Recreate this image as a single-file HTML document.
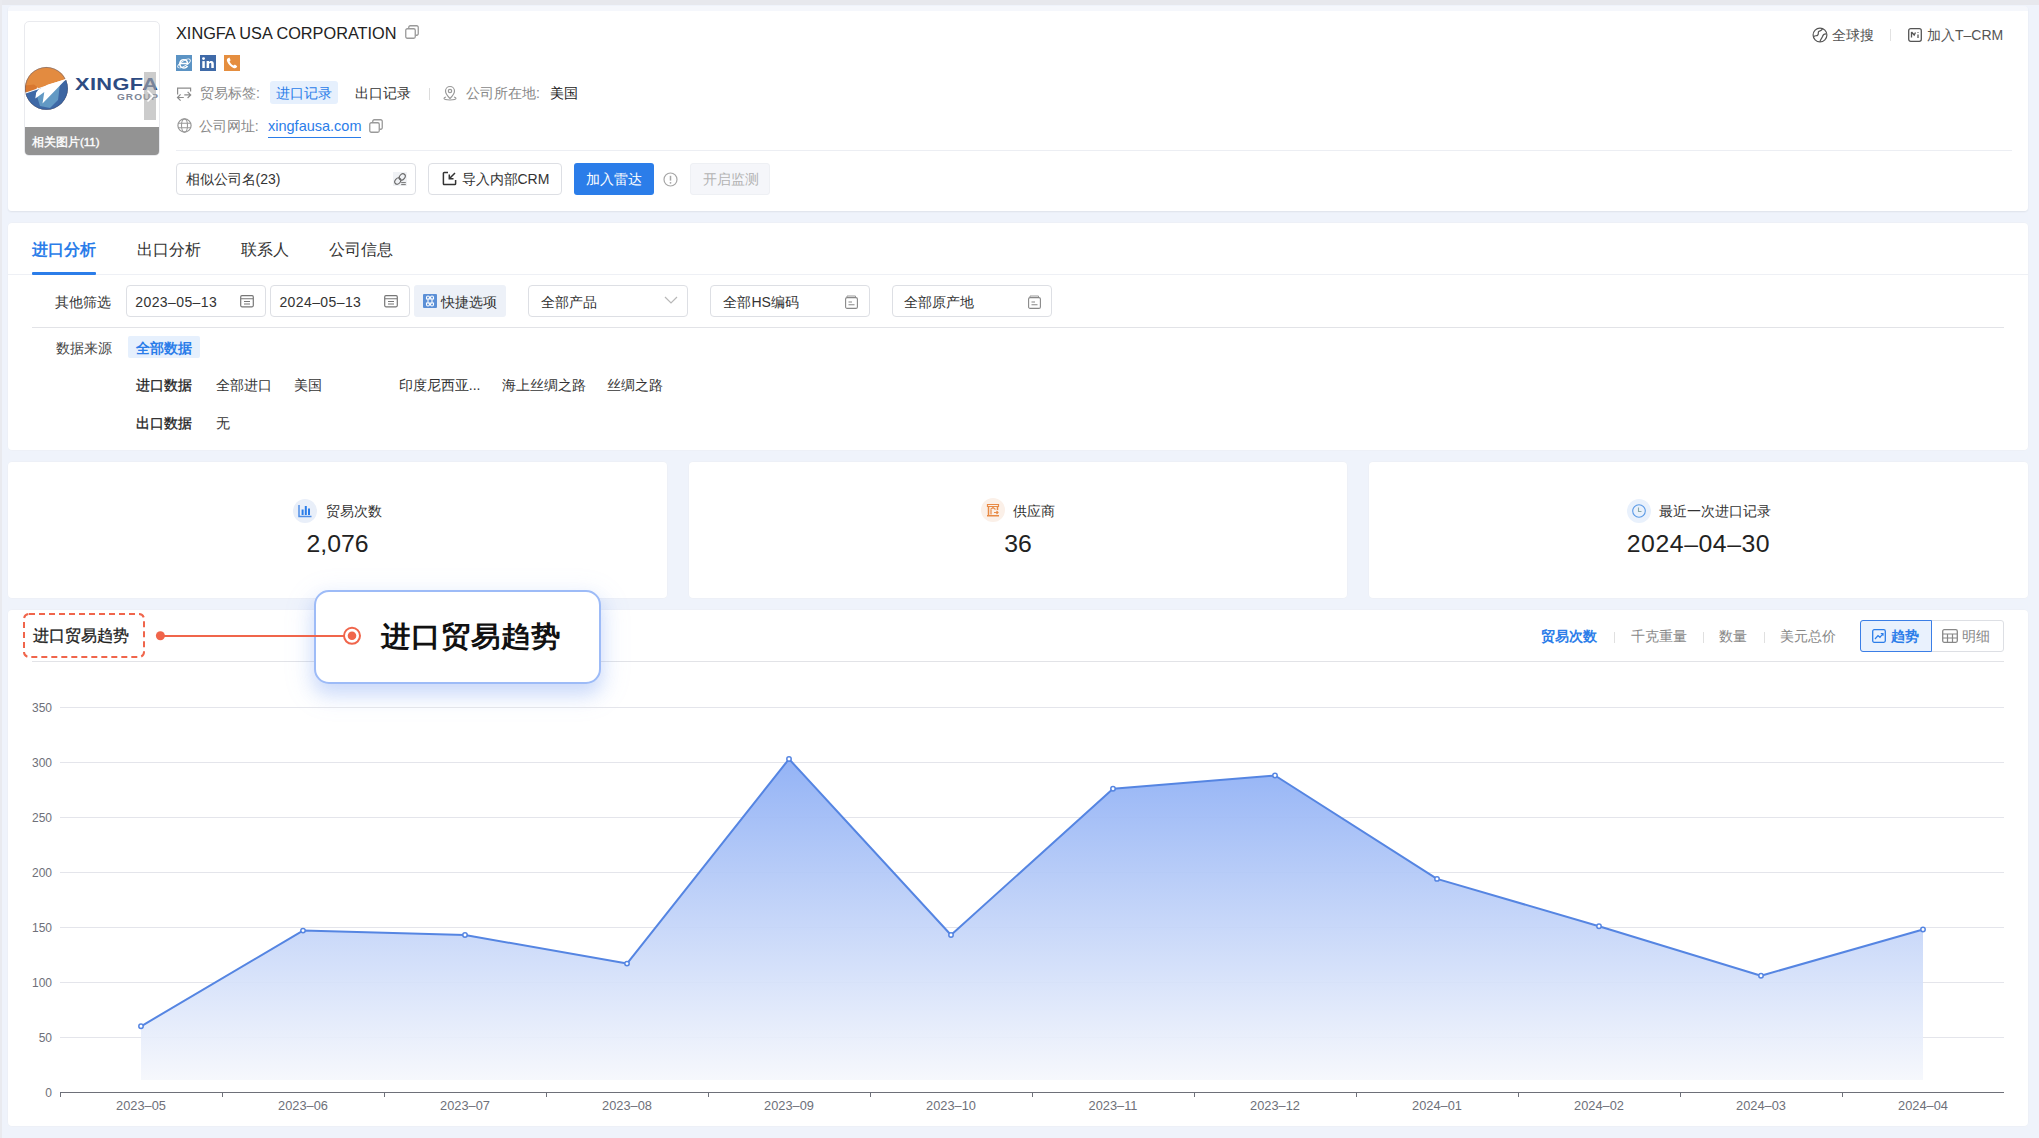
<!DOCTYPE html>
<html><head><meta charset="utf-8">
<style>
*{box-sizing:border-box;margin:0;padding:0}
html,body{width:2039px;height:1138px;overflow:hidden}
body{position:relative;background:#eff3fb;font-family:"Liberation Sans",sans-serif;color:#222;font-size:14px;line-height:20px}
.a{position:absolute;white-space:nowrap}
.card{position:absolute;background:#fff;border-radius:4px;box-shadow:0 0 0 0.5px #eceef3}
.g{color:#888}
.blue{color:#2b7de9}
.box{position:absolute;border:1px solid #dddfe4;border-radius:4px;background:#fff}
svg{position:absolute;overflow:visible}
</style></head><body>
<!-- top strip -->
<div class="a" style="left:0;top:0;width:2039px;height:5px;background:#e7e8ed"></div>
<div class="a" style="left:0;top:0;width:2px;height:1138px;background:#e9eaef"></div>

<!-- ============ HEADER CARD ============ -->
<div class="card" style="left:8px;top:6px;width:2020px;height:205px;box-shadow:0 1px 2px rgba(0,0,0,0.07);background:linear-gradient(#f5f7fc 0,#f5f7fc 5px,#fff 5px)"></div>

<!-- logo box -->
<div class="a" style="left:24px;top:21px;width:136px;height:135px;border:1px solid #e9eaee;border-radius:5px;overflow:hidden;background:#fff">
  <svg style="left:-25px;top:-22px" width="100" height="120" viewBox="0 0 100 120">
    <defs><clipPath id="cc"><circle cx="46.35" cy="88.4" r="21.4"/></clipPath></defs>
    <g clip-path="url(#cc)">
      <rect x="20" y="60" width="55" height="55" fill="#e38b40"/>
      <path d="M20 86 L34 84.5 L40 89 L46 85 L48 92 L20 96 Z" fill="#d97830"/>
      <path d="M20 94.5 L66.5 79.8 L75 78 V115 H20 Z" fill="#3f69a6"/>
      <path d="M36 93 L50 88 L60 84 L58 100 L50 108 L40 106 Z" fill="#6299c4"/>
      <path d="M60 84 L75 78 V115 H58 Z" fill="#3d64a0" opacity="0.6"/>
    </g>
    <circle cx="46.35" cy="88.4" r="21" fill="none" stroke="#33538a" stroke-width="0.8" opacity="0.5"/>
    <path d="M24 93.6 L66.5 79.2" stroke="#fff" stroke-width="1.1"/>
    <path d="M66 79.3 L48 84.5 L38.5 89.5 L36.2 92.6 L35.3 98.6 L44.3 91.9 L42.5 103.6 Z" fill="#fff"/>
    <circle cx="37.5" cy="88.3" r="0.9" fill="#fff"/>
  </svg>
  <div class="a" style="left:50px;top:53px;font-size:17px;line-height:20px;font-weight:bold;color:#2d4b82;transform:scaleX(1.28);transform-origin:0 0;letter-spacing:0.3px">XINGFA</div>
  <div class="a" style="left:92px;top:70.1px;font-size:9px;line-height:10px;font-weight:bold;color:#7d8697;letter-spacing:0.9px;transform:scaleX(1.12);transform-origin:0 0">GROUP</div>
  <div class="a" style="left:119px;top:50px;width:12px;height:48px;background:rgba(170,170,170,0.6)"></div>
  <svg style="left:121px;top:67px" width="9" height="14" viewBox="0 0 9 14"><path d="M1.5 1.5 L7 7 L1.5 12.5" fill="none" stroke="#fff" stroke-width="1.6"/></svg>
  <div class="a" style="left:0;top:105px;width:134px;height:29px;background:#939393"></div>
  <div class="a" style="left:7px;top:112px;font-size:11.5px;line-height:16px;color:#fff;-webkit-text-stroke:0.35px #fff">相关图片(11)</div>
</div>

<!-- title -->
<div class="a" style="left:176px;top:23.2px;font-size:16.3px;color:#222">XINGFA USA CORPORATION</div>
<svg style="left:405px;top:25px" width="14" height="14" viewBox="0 0 14 14"><rect x="0.75" y="3.75" width="9.5" height="9.5" rx="1.5" fill="#fff" stroke="#9a9a9a" stroke-width="1.3"/><path d="M3.75 3.5 V2.25 a1.5 1.5 0 0 1 1.5-1.5 H11.75 a1.5 1.5 0 0 1 1.5 1.5 V8.75 a1.5 1.5 0 0 1 -1.5 1.5 H10.5" fill="none" stroke="#9a9a9a" stroke-width="1.3"/></svg>

<!-- social -->
<svg style="left:176px;top:55px" width="16" height="16" viewBox="0 0 16 16"><rect width="16" height="16" fill="#5b93c4"/><path d="M12.3 9.2 H4.6 C4.7 11 6 12.2 7.9 12.2 C9.2 12.2 10.1 11.6 10.6 10.7 L12.2 11.3 C11.4 12.8 9.9 13.7 7.9 13.7 C5 13.7 3 11.7 3 8.8 C3 5.9 5 3.9 7.8 3.9 C10.6 3.9 12.4 5.8 12.4 8.7 Z M4.7 7.8 H10.7 C10.5 6.3 9.4 5.3 7.8 5.3 C6.2 5.3 5 6.3 4.7 7.8 Z" fill="#fff"/><ellipse cx="8" cy="8.5" rx="7.2" ry="2.6" transform="rotate(-32 8 8.5)" fill="none" stroke="#fff" stroke-width="0.9"/></svg>
<svg style="left:200px;top:55px" width="16" height="16" viewBox="0 0 16 16"><rect width="16" height="16" fill="#3f6aa8"/><rect x="2.3" y="6.1" width="2.5" height="6.9" fill="#fff"/><circle cx="3.55" cy="3.6" r="1.45" fill="#fff"/><path d="M6.6 6.1 H9 V7.1 C9.5 6.3 10.4 5.9 11.3 5.9 C13 5.9 13.8 7 13.8 8.8 V13 H11.3 V9.3 C11.3 8.4 11 7.9 10.3 7.9 C9.5 7.9 9.1 8.5 9.1 9.4 V13 H6.6 Z" fill="#fff"/></svg>
<svg style="left:224px;top:55px" width="16" height="16" viewBox="0 0 16 16"><rect width="16" height="16" fill="#e58e3f"/><path d="M5.4 2.6 L3.6 3.4 C2.8 4 2.7 5.2 3.2 6.6 C4.3 9.4 6.6 11.8 9.4 13 C10.8 13.5 11.9 13.3 12.5 12.6 L13.2 11.2 L10.9 9.6 L9.7 10.6 C8 9.9 6.3 8.1 5.6 6.4 L6.6 5.3 Z" fill="#fff"/></svg>
<!-- row 3 -->
<svg style="left:177px;top:86.6px" width="15" height="14" viewBox="0 0 15 14"><path d="M0.6 7.4 V1.2 H13.6 V4.5 M7.3 7.9 H13.6 M10.6 4.8 L13.7 7.9 L10.6 11 M0.5 10.5 H6.8 M3.6 7.4 L0.5 10.5 L3.6 13.6" fill="none" stroke="#8c8c8c" stroke-width="1.2"/></svg>
<div class="a g" style="left:200px;top:83.3px">贸易标签:</div>
<div class="a" style="left:270px;top:81px;width:68px;height:23px;background:#e6f0fd;border-radius:3px"></div>
<div class="a blue" style="left:276px;top:83.3px">进口记录</div>
<div class="a" style="left:354.5px;top:83.3px;color:#333">出口记录</div>
<div class="a" style="left:429px;top:88px;width:1px;height:12px;background:#dcdcdc"></div>
<svg style="left:442px;top:85px" width="16" height="16" viewBox="0 0 16 16"><path d="M8 13.5 C5 10.5 3.5 8.3 3.5 6 A4.5 4.5 0 0 1 12.5 6 C12.5 8.3 11 10.5 8 13.5 Z" fill="none" stroke="#999" stroke-width="1.2"/><circle cx="8" cy="6" r="1.7" fill="none" stroke="#999" stroke-width="1.2"/><path d="M4 12 C2.3 12.5 2 13 2 13.3 C2 14.3 4.7 15 8 15 C11.3 15 14 14.3 14 13.3 C14 13 13.7 12.5 12 12" fill="none" stroke="#999" stroke-width="1.1"/></svg>
<div class="a g" style="left:466px;top:83.3px">公司所在地:</div>
<div class="a" style="left:550px;top:83.3px;color:#222">美国</div>

<!-- row 4 -->
<svg style="left:177px;top:118px" width="15" height="15" viewBox="0 0 15 15"><circle cx="7.5" cy="7.5" r="6.6" fill="none" stroke="#999" stroke-width="1.2"/><ellipse cx="7.5" cy="7.5" rx="3" ry="6.6" fill="none" stroke="#999" stroke-width="1.1"/><path d="M1 5.3 H14 M1 9.7 H14" stroke="#999" stroke-width="1.1"/></svg>
<div class="a g" style="left:198.7px;top:115.8px">公司网址:</div>
<div class="a blue" style="left:268px;top:115.5px;font-size:14.5px">xingfausa.com</div>
<div class="a" style="left:268px;top:137px;width:93px;height:1px;background:#2b7de9"></div>
<svg style="left:369px;top:119px" width="14" height="14" viewBox="0 0 14 14"><rect x="0.75" y="3.75" width="9.5" height="9.5" rx="1.5" fill="#fff" stroke="#9a9a9a" stroke-width="1.3"/><path d="M3.75 3.5 V2.25 a1.5 1.5 0 0 1 1.5-1.5 H11.75 a1.5 1.5 0 0 1 1.5 1.5 V8.75 a1.5 1.5 0 0 1 -1.5 1.5 H10.5" fill="none" stroke="#9a9a9a" stroke-width="1.3"/></svg>

<!-- divider -->
<div class="a" style="left:176px;top:150px;width:1836px;height:1px;background:#eceef3"></div>

<!-- row 5 -->
<div class="box" style="left:176px;top:163px;width:240px;height:32px"></div>
<div class="a" style="left:185.5px;top:169px;color:#333">相似公司名(23)</div>
<svg style="left:393px;top:172px" width="14" height="14" viewBox="0 0 14 14"><rect x="0" y="0" width="14" height="14" fill="#f0f2f5"/><ellipse cx="9.2" cy="4.9" rx="3.5" ry="2.6" transform="rotate(-50 9.2 4.9)" fill="none" stroke="#666" stroke-width="1.1"/><ellipse cx="4.8" cy="9.1" rx="3.5" ry="2.6" transform="rotate(-50 4.8 9.1)" fill="none" stroke="#666" stroke-width="1.1"/><path d="M8.2 10.6 H12.8 M8.2 12.6 H12.8" stroke="#666" stroke-width="0.9"/></svg>

<div class="box" style="left:428px;top:163px;width:134px;height:32px"></div>
<svg style="left:442px;top:171px" width="15" height="15" viewBox="0 0 15 15"><path d="M6 1.5 H2.2 a0.8 0.8 0 0 0 -0.8 0.8 V12.8 a0.8 0.8 0 0 0 0.8 0.8 H12.8 a0.8 0.8 0 0 0 0.8 -0.8 V9" fill="none" stroke="#333" stroke-width="1.5"/><path d="M13 2 L7.5 7.5 M7.3 3.5 V7.7 H11.5" fill="none" stroke="#333" stroke-width="1.5"/></svg>
<div class="a" style="left:461.5px;top:169px;color:#333;font-size:14px">导入内部CRM</div>

<div class="a" style="left:574px;top:163px;width:80px;height:32px;background:#2b7de9;border-radius:3px"></div>
<div class="a" style="left:586px;top:169px;color:#fff">加入雷达</div>
<svg style="left:663px;top:172px" width="15" height="15" viewBox="0 0 15 15"><circle cx="7.5" cy="7.5" r="6.5" fill="none" stroke="#a6a6a6" stroke-width="1.2"/><path d="M7.5 3.8 V8.6" stroke="#a6a6a6" stroke-width="1.5"/><circle cx="7.5" cy="10.8" r="0.9" fill="#a6a6a6"/></svg>
<div class="a" style="left:690px;top:163px;width:80px;height:32px;background:#f5f6fa;border:1px solid #eef0f4;border-radius:3px"></div>
<div class="a" style="left:702.5px;top:169px;color:#b3b3b3">开启监测</div>

<!-- top right -->
<svg style="left:1812px;top:27px" width="16" height="16" viewBox="0 0 16 16"><circle cx="8" cy="8" r="6.9" fill="none" stroke="#555" stroke-width="1.2"/><path d="M1.8 9.5 C3.5 8 4.5 9.5 5.8 8 C7 6.5 5.5 5 7 4.2 C8.5 3.5 9.5 4 10.5 1.8 M14.5 7 C12.5 6.8 11 7.8 10.5 9.5 C10 11 9 11.5 8 14.5" fill="none" stroke="#555" stroke-width="1.2"/></svg>
<div class="a" style="left:1832px;top:24.8px;color:#555">全球搜</div>
<div class="a" style="left:1890px;top:29px;width:1px;height:12px;background:#e2e2e2"></div>
<svg style="left:1908px;top:28px" width="14" height="14" viewBox="0 0 14 14"><rect x="0.7" y="0.7" width="12.6" height="12.6" rx="2" fill="none" stroke="#555" stroke-width="1.3"/><path d="M3.5 4 V9.5 M3.5 4 L6.2 7 L7.5 4.5 M10 6.5 V10 M10 4 V4.8" fill="none" stroke="#555" stroke-width="1.3"/></svg>
<div class="a" style="left:1927px;top:24.8px;color:#555">加入T–CRM</div>


<!-- ============ TABS CARD ============ -->
<div class="card" style="left:8px;top:223px;width:2020px;height:227px"></div>

<!-- tabs -->
<div class="a blue" style="left:32px;top:240.2px;font-size:16px;font-weight:bold">进口分析</div>
<div class="a" style="left:137.3px;top:240.2px;font-size:16px;color:#333">出口分析</div>
<div class="a" style="left:240.6px;top:240.2px;font-size:16px;color:#333">联系人</div>
<div class="a" style="left:328.9px;top:240.2px;font-size:16px;color:#333">公司信息</div>
<div class="a" style="left:8px;top:274px;width:2020px;height:1px;background:#eef0f5"></div>
<div class="a" style="left:32px;top:271.5px;width:64px;height:3px;background:#2b7de9;border-radius:1px"></div>

<!-- filter row -->
<div class="a" style="left:54.6px;top:291.7px;color:#333">其他筛选</div>
<div class="box" style="left:126px;top:285px;width:140px;height:32px"></div>
<div class="a" style="left:135.3px;top:291.5px;color:#333;letter-spacing:0.4px">2023–05–13</div>
<svg style="left:240px;top:294px" width="14" height="14" viewBox="0 0 14 14"><rect x="0.7" y="1.7" width="12.6" height="11.1" rx="1.2" fill="none" stroke="#777" stroke-width="1.2"/><path d="M1 4.8 H13 M4 7.5 H10 M4 10 H10" stroke="#777" stroke-width="1.1"/></svg>
<div class="box" style="left:270px;top:285px;width:140px;height:32px"></div>
<div class="a" style="left:279.4px;top:291.5px;color:#333;letter-spacing:0.4px">2024–05–13</div>
<svg style="left:384px;top:294px" width="14" height="14" viewBox="0 0 14 14"><rect x="0.7" y="1.7" width="12.6" height="11.1" rx="1.2" fill="none" stroke="#777" stroke-width="1.2"/><path d="M1 4.8 H13 M4 7.5 H10 M4 10 H10" stroke="#777" stroke-width="1.1"/></svg>
<div class="a" style="left:414px;top:285px;width:92px;height:32px;background:#edf1f8;border-radius:3px"></div>
<svg style="left:423px;top:294px" width="14" height="14" viewBox="0 0 14 14"><rect x="0" y="0" width="14" height="14" rx="1" fill="#5b8fd6"/><path d="M5 5 V9 M9 5 V9 M5 5 H9 M5 9 H9 M5 5 a1.5 1.5 0 1 0 -1.5 -1.5 V5 Z M9 5 a1.5 1.5 0 1 1 1.5 -1.5 V5 Z M5 9 a1.5 1.5 0 1 1 -1.5 1.5 V9 Z M9 9 a1.5 1.5 0 1 0 1.5 1.5 V9 Z" fill="none" stroke="#fff" stroke-width="1.1"/></svg>
<div class="a" style="left:441.4px;top:291.7px;color:#333">快捷选项</div>

<div class="box" style="left:528px;top:285px;width:160px;height:32px"></div>
<div class="a" style="left:541.2px;top:291.7px;color:#333">全部产品</div>
<svg style="left:664px;top:295px" width="14" height="10" viewBox="0 0 14 10"><path d="M1 2 L7 8 L13 2" fill="none" stroke="#b8b8b8" stroke-width="1.2"/></svg>
<div class="box" style="left:710px;top:285px;width:160px;height:32px"></div>
<div class="a" style="left:723.4px;top:291.7px;color:#333">全部HS编码</div>
<svg style="left:845px;top:295px" width="13" height="14" viewBox="0 0 13 14"><path d="M2 2.5 V1 H10.5 V2.5" fill="none" stroke="#999" stroke-width="1"/><rect x="0.6" y="2.6" width="11.8" height="10.8" rx="1.5" fill="none" stroke="#888" stroke-width="1.1"/><path d="M3.5 7 H7 M3.5 9.8 H9.5" stroke="#888" stroke-width="1.1"/></svg>
<div class="box" style="left:892px;top:285px;width:160px;height:32px"></div>
<div class="a" style="left:904px;top:291.7px;color:#333">全部原产地</div>
<svg style="left:1028px;top:295px" width="13" height="14" viewBox="0 0 13 14"><path d="M2 2.5 V1 H10.5 V2.5" fill="none" stroke="#999" stroke-width="1"/><rect x="0.6" y="2.6" width="11.8" height="10.8" rx="1.5" fill="none" stroke="#888" stroke-width="1.1"/><path d="M3.5 7 H7 M3.5 9.8 H9.5" stroke="#888" stroke-width="1.1"/></svg>

<div class="a" style="left:32px;top:327px;width:1972px;height:1px;background:#e2e3e7"></div>

<!-- data source -->
<div class="a" style="left:56.3px;top:337.8px;color:#444">数据来源</div>
<div class="a" style="left:128px;top:336px;width:72px;height:22px;background:#e6f0fd;border-radius:2px"></div>
<div class="a blue" style="left:135.7px;top:337.8px;font-weight:bold">全部数据</div>
<div class="a" style="left:136.4px;top:374.7px;color:#222;-webkit-text-stroke:0.3px #222">进口数据</div>
<div class="a" style="left:216.4px;top:374.7px;color:#333">全部进口</div>
<div class="a" style="left:294.2px;top:374.7px;color:#333">美国</div>
<div class="a" style="left:398.8px;top:374.7px;color:#333">印度尼西亚...</div>
<div class="a" style="left:502px;top:374.7px;color:#333">海上丝绸之路</div>
<div class="a" style="left:606.5px;top:374.7px;color:#333">丝绸之路</div>
<div class="a" style="left:136.4px;top:412.8px;color:#222;-webkit-text-stroke:0.3px #222">出口数据</div>
<div class="a" style="left:216.4px;top:413.1px;color:#333">无</div>


<!-- ============ STAT CARDS ============ -->
<div class="card" style="left:8px;top:462px;width:659px;height:136px"></div>
<div class="card" style="left:689px;top:462px;width:658px;height:136px"></div>
<div class="card" style="left:1369px;top:462px;width:659px;height:136px"></div>

<!-- stat 1 -->
<div class="a" style="left:293px;top:499px;width:24px;height:24px;border-radius:50%;background:#e9eff9"></div>
<svg style="left:298px;top:504px" width="14" height="14" viewBox="0 0 14 14"><path d="M1 1 V12.5 H13.5" fill="none" stroke="#4f8ee6" stroke-width="1.5"/><rect x="3.6" y="5.5" width="2" height="5.5" fill="#2b7de9"/><rect x="6.8" y="2" width="2" height="9" fill="#2b7de9"/><rect x="10" y="4.5" width="2" height="6.5" fill="#2b7de9"/></svg>
<div class="a" style="left:326px;top:501.2px;color:#333">贸易次数</div>
<div class="a" style="left:8px;width:659px;top:529px;font-size:24.8px;line-height:30px;text-align:center;color:#222">2,076</div>
<!-- stat 2 -->
<div class="a" style="left:981px;top:498px;width:24px;height:24px;border-radius:50%;background:#fbf0e8"></div>
<svg style="left:986px;top:503px" width="14" height="14" viewBox="0 0 14 14"><path d="M1.5 1.5 H12.5 V3.5 H1.5 Z" fill="none" stroke="#e88a45" stroke-width="1.2"/><path d="M2.5 3.5 V12.5 M11.5 3.5 V7 M1 12.8 H13" stroke="#e88a45" stroke-width="1.5"/><path d="M4.5 6.5 L7 4.5 L9.5 6.5 M5 7 V11.5 M8 9.5 H12 M10.5 8 L12 9.5 L10.5 11" fill="none" stroke="#e88a45" stroke-width="1.2"/></svg>
<div class="a" style="left:1012.8px;top:501.2px;color:#333">供应商</div>
<div class="a" style="left:689px;width:658px;top:529px;font-size:24.8px;line-height:30px;text-align:center;color:#222;padding-left:0px">36</div>
<!-- stat 3 -->
<div class="a" style="left:1627px;top:499px;width:24px;height:24px;border-radius:50%;background:#e9f1fc"></div>
<svg style="left:1632px;top:504px" width="14" height="14" viewBox="0 0 14 14"><circle cx="7" cy="7" r="6.3" fill="none" stroke="#5a9ae6" stroke-width="1.1"/><path d="M6.5 3.5 V7.5 H9.5" fill="none" stroke="#8aa" stroke-width="1.1"/></svg>
<div class="a" style="left:1659.3px;top:501.2px;color:#333">最近一次进口记录</div>
<div class="a" style="left:1369px;width:659px;top:529px;font-size:24.8px;line-height:30px;text-align:center;color:#222;letter-spacing:0.55px">2024–04–30</div>


<!-- ============ CHART CARD ============ -->
<div class="card" style="left:8px;top:610px;width:2020px;height:516px"></div>


<!-- chart header -->
<div class="a" style="left:32px;top:661px;width:1972px;height:1px;background:#e2e3e7"></div>
<svg style="left:23px;top:613px" width="122" height="45" viewBox="0 0 122 45"><rect x="1" y="1" width="120" height="43" rx="5" fill="none" stroke="#f0654b" stroke-width="2" stroke-dasharray="6 4"/></svg>
<div class="a" style="left:32.5px;top:626.3px;font-size:16px;color:#222;-webkit-text-stroke:0.3px #222">进口贸易趋势</div>
<div class="a" style="left:314px;top:589.5px;width:287px;height:94.5px;border:2px solid #9dbbf7;border-radius:15px;background:#fff;box-shadow:0 10px 18px rgba(80,130,240,0.24),0 8px 26px 8px rgba(130,165,245,0.10)"></div>
<svg style="left:0;top:0" width="2039" height="1138">
<line x1="160" y1="636" x2="344" y2="636" stroke="#f0654b" stroke-width="1.8"/>
<circle cx="160.4" cy="635.8" r="4.5" fill="#f0654b"/>
<circle cx="352" cy="635.8" r="8" fill="#fff" stroke="#f0654b" stroke-width="2"/>
<circle cx="352" cy="635.8" r="4.3" fill="#f0654b"/>
</svg>
<div class="a" style="left:380.5px;top:620.5px;font-size:29.6px;line-height:32px;font-weight:bold;color:#111;transform:scaleY(0.95);transform-origin:50% 50%">进口贸易趋势</div>

<div class="a blue" style="left:1541.4px;top:625.5px;font-weight:bold">贸易次数</div>
<div class="a" style="left:1613.5px;top:632px;width:1px;height:11px;background:#e0e0e0"></div>
<div class="a g" style="left:1631.1px;top:625.5px">千克重量</div>
<div class="a" style="left:1702.5px;top:632px;width:1px;height:11px;background:#e0e0e0"></div>
<div class="a g" style="left:1719.1px;top:625.5px">数量</div>
<div class="a" style="left:1763.5px;top:632px;width:1px;height:11px;background:#e0e0e0"></div>
<div class="a g" style="left:1780.2px;top:625.5px">美元总价</div>
<div class="a" style="left:1860px;top:620px;width:144px;height:32px;border:1px solid #dddfe4;border-radius:3px"></div>
<div class="a" style="left:1860px;top:620px;width:72px;height:32px;border:1px solid #3b7ee6;border-radius:3px 0 0 3px;background:#e9f1fd"></div>
<svg style="left:1872px;top:629px" width="14" height="14" viewBox="0 0 14 14"><rect x="0.7" y="0.7" width="12.6" height="12.6" rx="1.5" fill="none" stroke="#2b7de9" stroke-width="1.3"/><path d="M3 10 L6 6.5 L8 8.3 L11 4.5 M8.8 4.5 H11 V6.7" fill="none" stroke="#2b7de9" stroke-width="1.2"/></svg>
<div class="a blue" style="left:1891px;top:625.5px;font-weight:bold">趋势</div>
<svg style="left:1942px;top:629px" width="16" height="14" viewBox="0 0 16 14"><rect x="0.7" y="0.7" width="14.6" height="12.6" rx="1.5" fill="none" stroke="#888" stroke-width="1.3"/><path d="M1 5 H15 M1 9 H15 M5.5 5 V13 M10.5 5 V13" stroke="#888" stroke-width="1.2"/></svg>
<div class="a g" style="left:1962.4px;top:625.5px">明细</div>

<!-- chart -->
<svg style="left:0;top:0" width="2039" height="1138">
<defs><linearGradient id="ag" gradientUnits="userSpaceOnUse" x1="0" y1="759" x2="0" y2="1080">
<stop offset="0" stop-color="#8eaff5" stop-opacity="0.95"/><stop offset="1" stop-color="#f5f7fc" stop-opacity="0.9"/></linearGradient></defs>
<line x1="60" y1="1037.5" x2="2004" y2="1037.5" stroke="#dfe1e8" stroke-opacity="0.85" stroke-width="1"/>
<line x1="60" y1="982.5" x2="2004" y2="982.5" stroke="#dfe1e8" stroke-opacity="0.85" stroke-width="1"/>
<line x1="60" y1="927.5" x2="2004" y2="927.5" stroke="#dfe1e8" stroke-opacity="0.85" stroke-width="1"/>
<line x1="60" y1="872.5" x2="2004" y2="872.5" stroke="#dfe1e8" stroke-opacity="0.85" stroke-width="1"/>
<line x1="60" y1="817.5" x2="2004" y2="817.5" stroke="#dfe1e8" stroke-opacity="0.85" stroke-width="1"/>
<line x1="60" y1="762.5" x2="2004" y2="762.5" stroke="#dfe1e8" stroke-opacity="0.85" stroke-width="1"/>
<line x1="60" y1="707.5" x2="2004" y2="707.5" stroke="#dfe1e8" stroke-opacity="0.85" stroke-width="1"/>

<polygon points="141,1026.3 303,930.6 465,935.0 627,963.6 789,759.0 951,935.0 1113,788.7 1275,775.5 1437,878.9 1599,926.2 1761,975.7 1923,929.5 1923,1080 141,1080" fill="url(#ag)"/>
<line x1="60" y1="1092.5" x2="2004" y2="1092.5" stroke="#6e7079" stroke-width="1"/>
<line x1="60.5" y1="1092" x2="60.5" y2="1097" stroke="#6e7079" stroke-width="1"/>
<line x1="222.5" y1="1092" x2="222.5" y2="1097" stroke="#6e7079" stroke-width="1"/>
<line x1="384.5" y1="1092" x2="384.5" y2="1097" stroke="#6e7079" stroke-width="1"/>
<line x1="546.5" y1="1092" x2="546.5" y2="1097" stroke="#6e7079" stroke-width="1"/>
<line x1="708.5" y1="1092" x2="708.5" y2="1097" stroke="#6e7079" stroke-width="1"/>
<line x1="870.5" y1="1092" x2="870.5" y2="1097" stroke="#6e7079" stroke-width="1"/>
<line x1="1032.5" y1="1092" x2="1032.5" y2="1097" stroke="#6e7079" stroke-width="1"/>
<line x1="1194.5" y1="1092" x2="1194.5" y2="1097" stroke="#6e7079" stroke-width="1"/>
<line x1="1356.5" y1="1092" x2="1356.5" y2="1097" stroke="#6e7079" stroke-width="1"/>
<line x1="1518.5" y1="1092" x2="1518.5" y2="1097" stroke="#6e7079" stroke-width="1"/>
<line x1="1680.5" y1="1092" x2="1680.5" y2="1097" stroke="#6e7079" stroke-width="1"/>
<line x1="1842.5" y1="1092" x2="1842.5" y2="1097" stroke="#6e7079" stroke-width="1"/>

<polyline points="141,1026.3 303,930.6 465,935.0 627,963.6 789,759.0 951,935.0 1113,788.7 1275,775.5 1437,878.9 1599,926.2 1761,975.7 1923,929.5" fill="none" stroke="#5585e2" stroke-width="2" stroke-linejoin="round"/>
<circle cx="141" cy="1026.3" r="2.2" fill="#fff" stroke="#5585e2" stroke-width="1.5"/><circle cx="303" cy="930.6" r="2.2" fill="#fff" stroke="#5585e2" stroke-width="1.5"/><circle cx="465" cy="935.0" r="2.2" fill="#fff" stroke="#5585e2" stroke-width="1.5"/><circle cx="627" cy="963.6" r="2.2" fill="#fff" stroke="#5585e2" stroke-width="1.5"/><circle cx="789" cy="759.0" r="2.2" fill="#fff" stroke="#5585e2" stroke-width="1.5"/><circle cx="951" cy="935.0" r="2.2" fill="#fff" stroke="#5585e2" stroke-width="1.5"/><circle cx="1113" cy="788.7" r="2.2" fill="#fff" stroke="#5585e2" stroke-width="1.5"/><circle cx="1275" cy="775.5" r="2.2" fill="#fff" stroke="#5585e2" stroke-width="1.5"/><circle cx="1437" cy="878.9" r="2.2" fill="#fff" stroke="#5585e2" stroke-width="1.5"/><circle cx="1599" cy="926.2" r="2.2" fill="#fff" stroke="#5585e2" stroke-width="1.5"/><circle cx="1761" cy="975.7" r="2.2" fill="#fff" stroke="#5585e2" stroke-width="1.5"/><circle cx="1923" cy="929.5" r="2.2" fill="#fff" stroke="#5585e2" stroke-width="1.5"/>
</svg>
<div class="a" style="left:0;width:52px;text-align:right;top:1082.5px;font-size:12px;color:#6e7079">0</div>
<div class="a" style="left:0;width:52px;text-align:right;top:1027.5px;font-size:12px;color:#6e7079">50</div>
<div class="a" style="left:0;width:52px;text-align:right;top:972.5px;font-size:12px;color:#6e7079">100</div>
<div class="a" style="left:0;width:52px;text-align:right;top:917.5px;font-size:12px;color:#6e7079">150</div>
<div class="a" style="left:0;width:52px;text-align:right;top:862.5px;font-size:12px;color:#6e7079">200</div>
<div class="a" style="left:0;width:52px;text-align:right;top:807.5px;font-size:12px;color:#6e7079">250</div>
<div class="a" style="left:0;width:52px;text-align:right;top:752.5px;font-size:12px;color:#6e7079">300</div>
<div class="a" style="left:0;width:52px;text-align:right;top:697.5px;font-size:12px;color:#6e7079">350</div>

<div class="a" style="left:91px;width:100px;text-align:center;top:1095.5px;font-size:12.8px;color:#6e7079">2023–05</div>
<div class="a" style="left:253px;width:100px;text-align:center;top:1095.5px;font-size:12.8px;color:#6e7079">2023–06</div>
<div class="a" style="left:415px;width:100px;text-align:center;top:1095.5px;font-size:12.8px;color:#6e7079">2023–07</div>
<div class="a" style="left:577px;width:100px;text-align:center;top:1095.5px;font-size:12.8px;color:#6e7079">2023–08</div>
<div class="a" style="left:739px;width:100px;text-align:center;top:1095.5px;font-size:12.8px;color:#6e7079">2023–09</div>
<div class="a" style="left:901px;width:100px;text-align:center;top:1095.5px;font-size:12.8px;color:#6e7079">2023–10</div>
<div class="a" style="left:1063px;width:100px;text-align:center;top:1095.5px;font-size:12.8px;color:#6e7079">2023–11</div>
<div class="a" style="left:1225px;width:100px;text-align:center;top:1095.5px;font-size:12.8px;color:#6e7079">2023–12</div>
<div class="a" style="left:1387px;width:100px;text-align:center;top:1095.5px;font-size:12.8px;color:#6e7079">2024–01</div>
<div class="a" style="left:1549px;width:100px;text-align:center;top:1095.5px;font-size:12.8px;color:#6e7079">2024–02</div>
<div class="a" style="left:1711px;width:100px;text-align:center;top:1095.5px;font-size:12.8px;color:#6e7079">2024–03</div>
<div class="a" style="left:1873px;width:100px;text-align:center;top:1095.5px;font-size:12.8px;color:#6e7079">2024–04</div>



</body></html>
